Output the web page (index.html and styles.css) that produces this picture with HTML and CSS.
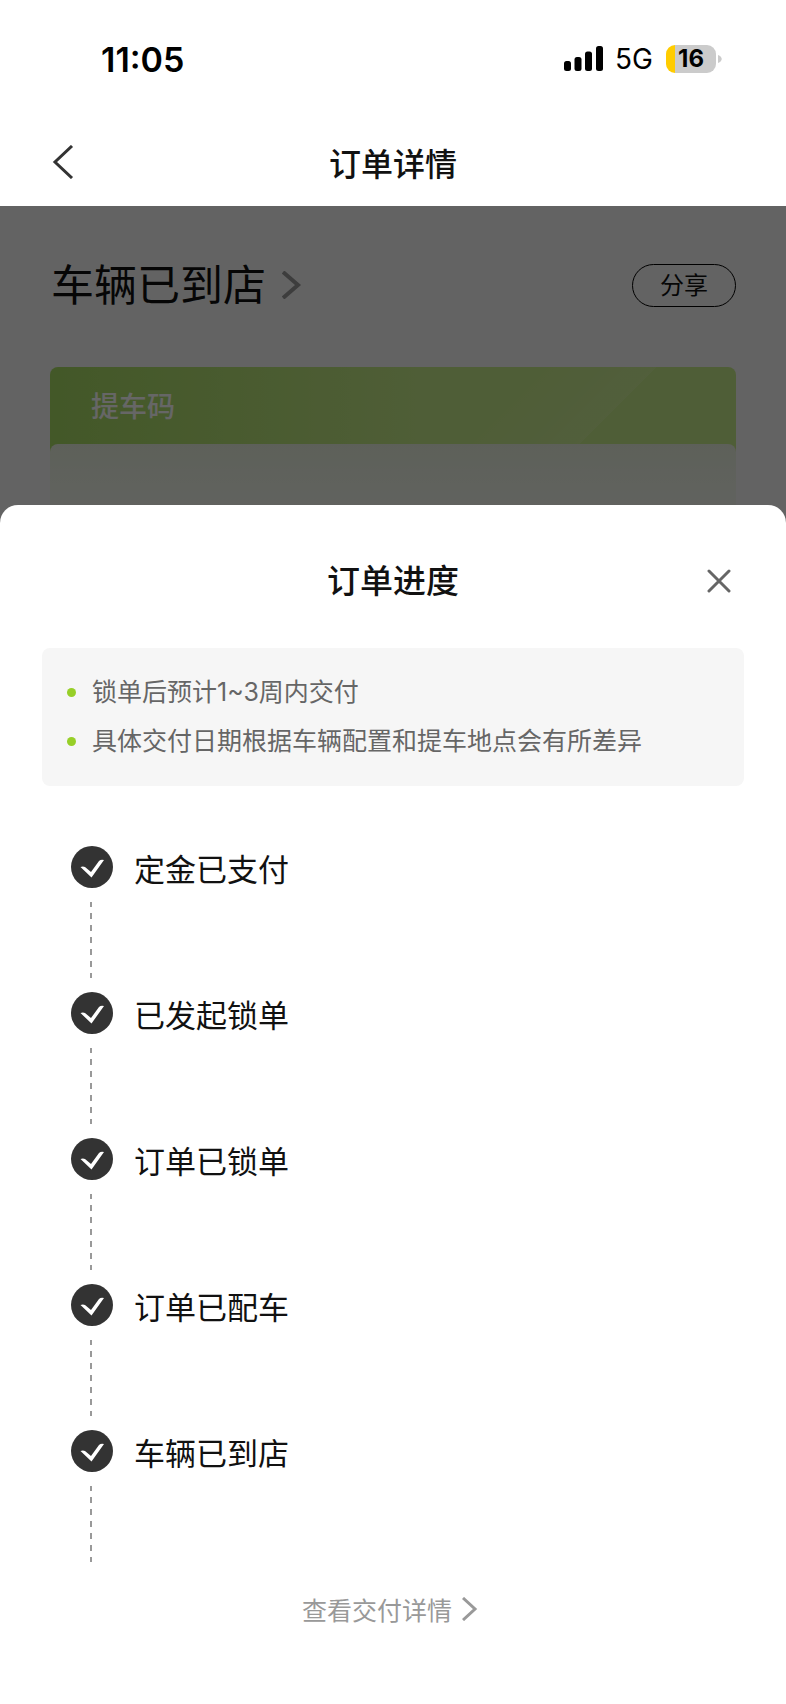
FILE: index.html
```html
<!DOCTYPE html>
<html lang="zh-CN">
<head>
  <meta charset="utf-8">
  <meta name="viewport" content="width=device-width, initial-scale=1">
  <title>订单详情</title>
  <link rel="stylesheet" href="styles.css">
</head>
<body>
  <!-- Status bar -->
  <div class="status-bar">
    <span class="status-time">11:05</span>
    <div class="status-icons">
      <svg class="signal" width="39" height="26" viewBox="0 0 39 26">
        <rect x="0" y="15" width="7" height="10" rx="2.5"/>
        <rect x="10.500" y="11" width="7" height="14" rx="2.500"/>
        <rect x="21" y="5.500" width="7" height="19.500" rx="2.500"/>
        <rect x="32" y="0" width="7" height="25" rx="2.500"/>
      </svg>
      <span class="network">5G</span>
      <div class="battery"><span class="battery-level">16</span></div>
      <svg class="battery-cap" width="4" height="10" viewBox="0 0 4 10">
        <path d="M0 1C5 3 5 7 0 9z" fill="#cbcbcb"/>
      </svg>
    </div>
  </div>

  <!-- Navigation -->
  <header class="nav-bar">
    <button class="icon-button" aria-label="返回">
      <svg width="24" height="34" viewBox="0 0 24 34" fill="none" stroke="#333" stroke-width="3">
        <path d="M22 1L5 17l17 16"/>
      </svg>
    </button>
    <h1 class="nav-title">订单详情</h1>
  </header>

  <div class="stage">
    <!-- Order page under the mask -->
    <main class="order">
      <div class="order-head">
        <a class="order-status" href="#">车辆已到店
          <svg width="20" height="28" viewBox="0 0 20 28" fill="none" stroke="#999" stroke-width="4">
            <path d="M1 1l15 13L1 27"/>
          </svg>
        </a>
        <button class="share-button">分享</button>
      </div>
      <section class="code-card">
        <h2 class="code-title">提车码</h2>
        <div class="code-body"></div>
      </section>
    </main>

    <!-- Progress sheet -->
    <section class="sheet">
      <div class="sheet-head">
        <h2 class="sheet-title">订单进度</h2>
        <button class="icon-button close-button" aria-label="关闭">
          <svg width="24" height="24" viewBox="0 0 24 24" fill="none" stroke="#666" stroke-width="3" stroke-linecap="round">
            <path d="M2 2l20 20M22 2L2 22"/>
          </svg>
        </button>
      </div>

      <ul class="notice">
        <li>锁单后预计1~3周内交付</li>
        <li>具体交付日期根据车辆配置和提车地点会有所差异</li>
      </ul>

      <svg class="symbols" width="0" height="0">
        <symbol id="check" viewBox="0 0 42 42">
          <circle cx="21" cy="21" r="21" fill="#333"/>
          <path d="M9.500 21q2.500-1 4.500 0l6 5 8-11q2-2 5-1L20.500 31.500z" fill="#fff"/>
        </symbol>
      </svg>

      <ol class="steps">
        <li class="step">
          <svg class="step-icon"><use href="#check"/></svg>
          <span class="step-name">定金已支付</span>
        </li>
        <li class="step">
          <svg class="step-icon"><use href="#check"/></svg>
          <span class="step-name">已发起锁单</span>
        </li>
        <li class="step">
          <svg class="step-icon"><use href="#check"/></svg>
          <span class="step-name">订单已锁单</span>
        </li>
        <li class="step">
          <svg class="step-icon"><use href="#check"/></svg>
          <span class="step-name">订单已配车</span>
        </li>
        <li class="step">
          <svg class="step-icon"><use href="#check"/></svg>
          <span class="step-name">车辆已到店</span>
        </li>
      </ol>

      <a class="detail-link" href="#">查看交付详情
        <svg width="16" height="24" viewBox="0 0 16 24" fill="none" stroke="#999" stroke-width="3">
          <path d="M1 1l12 11L1 23"/>
        </svg>
      </a>
    </section>
  </div>
</body>
</html>
```
FILE: styles.css
```css
* {
  box-sizing: border-box;
}

body {
  margin: 0;
  min-height: 100vh;
  background-color: #fff;
  color: #111;
  font-family: Inter, "Noto Sans CJK SC", sans-serif;
}

h1, h2, ul, ol {
  margin: 0;
  padding: 0;
}

ul, ol {
  list-style: none;
}

svg {
  display: block;
  flex-shrink: 0;
}

a {
  color: inherit;
  text-decoration: none;
}

button {
  padding: 0;
  border: none;
  background: none;
  color: inherit;
  font-family: inherit;
  cursor: pointer;
}

.icon-button {
  display: flex;
}

/* Status bar */
.status-bar {
  display: flex;
  align-items: center;
  justify-content: space-between;
  height: 118px;
  padding: 0 64px 0 101px;
  color: #000;
}

.status-time {
  font-size: 34px;
  font-weight: 600;
}

.status-icons {
  display: flex;
  align-items: center;
}

.network {
  margin: 0 13px 0 12px;
  font-size: 28px;
}

.battery {
  width: 50px;
  height: 28px;
  margin-right: 2px;
  border-radius: 9px;
  background: linear-gradient(to right, #fc0 9px, #cbcbcb 9px);
  text-align: center;
}

.battery-level {
  font-size: 24px;
  font-weight: 700;
  line-height: 28px;
}

/* Navigation */
.nav-bar {
  display: grid;
  grid-template-columns: 1fr auto 1fr;
  align-items: center;
  height: 88px;
  padding: 0 50px;
}

.nav-title {
  font-size: 32px;
  font-weight: 500;
}

/* Order page under the mask */
.order {
  position: relative;
  height: 331px;
  padding: 50px 50px 0;
  overflow: hidden;
  background-color: #f7f7f7;
}

.order::after {
  content: "";
  position: absolute;
  inset: 0;
  background-color: rgba(0, 0, 0, 0.6);
}

.order-head {
  display: flex;
  align-items: center;
  justify-content: space-between;
  height: 58px;
  margin-bottom: 53px;
}

.order-status {
  display: flex;
  align-items: center;
  gap: 16px;
  padding-left: 1px;
  font-size: 43px;
  line-height: 54px;
}

.share-button {
  width: 104px;
  height: 43px;
  border: 1px solid #000;
  border-radius: 22px;
  font-size: 24px;
  line-height: 41px;
}

.code-card {
  border-radius: 8px;
  background:
    linear-gradient(135deg, transparent 58%, rgba(255, 255, 255, 0.1) 72%, transparent 72%),
    linear-gradient(to right, #a8dc64, #c6eb8a 55%);
}

.code-title {
  padding: 4px 0 0 41px;
  color: #fff;
  font-size: 28px;
  font-weight: 500;
  line-height: 73px;
}

.code-body {
  height: 80px;
  border-radius: 8px;
  background: linear-gradient(#e9f1df, #f5f7f1);
}

/* Progress sheet */
.sheet {
  position: relative;
  margin-top: -32px;
  padding: 0 42px 70px;
  border-radius: 18px 18px 0 0;
  background-color: #fff;
}

.sheet-head {
  display: grid;
  grid-template-columns: 1fr auto 1fr;
  align-items: center;
  height: 143px;
  padding: 8px 13px 0;
}

.sheet-title {
  grid-column: 2;
  padding-bottom: 4px;
  font-size: 33px;
  font-weight: 500;
}

.close-button {
  justify-self: end;
}

.notice {
  padding: 20px 25px;
  border-radius: 8px;
  background-color: #f6f6f6;
  color: #666;
  font-size: 25px;
  line-height: 49px;
}

.notice li {
  display: flex;
  align-items: center;
  gap: 16px;
}

.notice li::before {
  content: "";
  width: 9px;
  height: 9px;
  border-radius: 50%;
  background-color: #97cf28;
}

.symbols {
  position: absolute;
}

.steps {
  padding: 60px 29px 0;
}

.step {
  display: grid;
  grid-template-columns: 42px 1fr;
  grid-template-rows: 42px 76px;
  gap: 14px 21px;
  padding-bottom: 14px;
}

.step-icon {
  width: 42px;
  height: 42px;
}

.step-name {
  font-size: 31px;
  line-height: 48px;
}

/* Dashed connector below each step */
.step::after {
  content: "";
  width: 2px;
  margin-left: 19px;
  background: repeating-linear-gradient(#999 0 5px, transparent 5px 11px, #999 11px 12px);
}

.detail-link {
  display: flex;
  align-items: center;
  justify-content: center;
  gap: 10px;
  margin-top: 15px;
  padding-right: 6px;
  color: #999;
  font-size: 25px;
}
```
